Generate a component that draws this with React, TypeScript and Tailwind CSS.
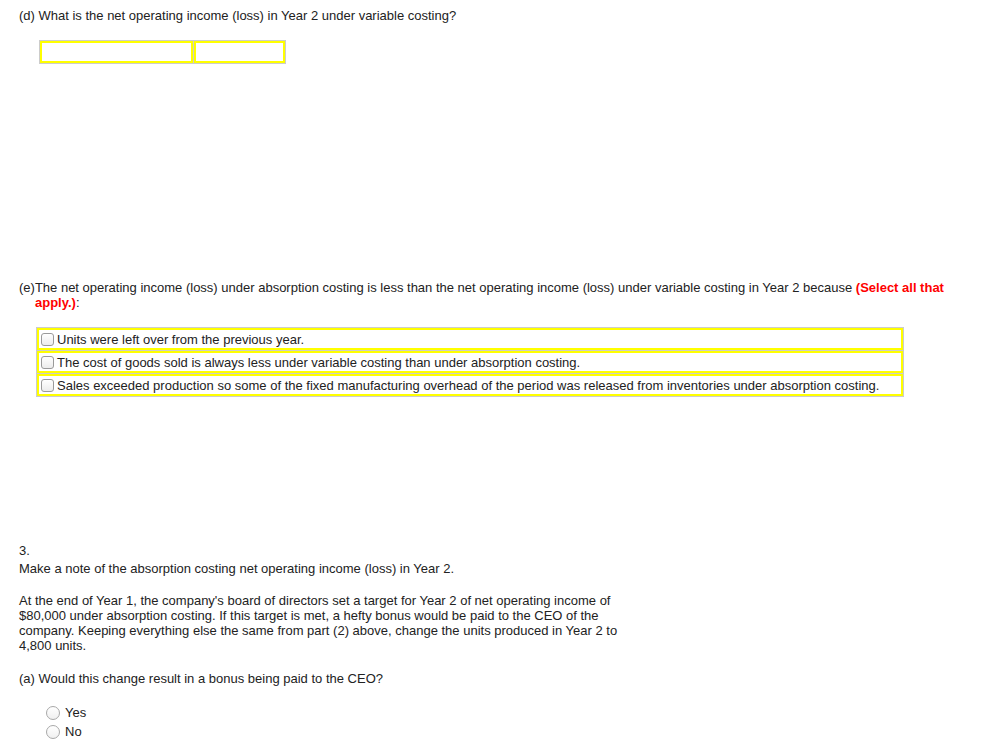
import React from "react";

const font = { fontFamily: '"Liberation Sans", Arial, Helvetica, sans-serif' };

function Checkbox() {
  return (
    <span className="inline-block w-[13px] h-[13px] rounded-[3px] border border-[#9a9a9a] bg-gradient-to-b from-white to-[#ececec] shrink-0" />
  );
}

function Radio() {
  return (
    <span className="inline-block w-[14px] h-[14px] rounded-full border border-[#a8a8a8] bg-gradient-to-b from-white to-[#f0f0f0] shrink-0" />
  );
}

export default function App() {
  const options = [
    "Units were left over from the previous year.",
    "The cost of goods sold is always less under variable costing than under absorption costing.",
    "Sales exceeded production so some of the fixed manufacturing overhead of the period was released from inventories under absorption costing.",
  ];
  return (
    <div
      className="bg-white min-h-[747px] w-[991px] text-[13px] leading-[15px] text-[#222] pl-[19px] pt-[8px]"
      style={font}
    >
      <div>(d) What is the net operating income (loss) in Year 2 under variable costing?</div>

      <div className="mt-[17px] ml-[20px] flex w-fit border border-[#cccccc] bg-[#cccccc] gap-px">
        <div className="w-[153px] h-[22px] bg-white border-2 border-[#ffff00]" />
        <div className="w-[91px] h-[22px] bg-white border-2 border-[#ffff00]" />
      </div>

      <div className="mt-[216px] pl-[16px] -indent-[16px] w-[940px]">
        (e)The net operating income (loss) under absorption costing is less than the net operating income (loss) under
        variable costing in Year 2 because <span className="font-bold text-[#ff0000]">(Select all that apply.)</span>:
      </div>

      <div className="mt-[17px] ml-[17px] w-[868px] flex flex-col border border-[#cccccc] bg-[#cccccc] gap-px">
        {options.map((o) => (
          <div key={o} className="h-[22px] bg-white border-2 border-[#ffff00] flex items-center pl-[2px] gap-[3px]">
            <Checkbox />
            <span>{o}</span>
          </div>
        ))}
      </div>

      <div className="mt-[146px]">3.</div>
      <div className="mt-[3px]">Make a note of the absorption costing net operating income (loss) in Year 2.</div>

      <div className="mt-[17px] w-[602px]">
        At the end of Year 1, the company's board of directors set a target for Year 2 of net operating income of
        $80,000 under absorption costing. If this target is met, a hefty bonus would be paid to the CEO of the company.
        Keeping everything else the same from part (2) above, change the units produced in Year 2 to 4,800 units.
      </div>

      <div className="mt-[18px]">(a) Would this change result in a bonus being paid to the CEO?</div>

      <div className="mt-[19px] ml-[27px] flex flex-col gap-[4px]">
        <div className="flex items-center gap-[5px]">
          <Radio />
          <span>Yes</span>
        </div>
        <div className="flex items-center gap-[5px]">
          <Radio />
          <span>No</span>
        </div>
      </div>
    </div>
  );
}
